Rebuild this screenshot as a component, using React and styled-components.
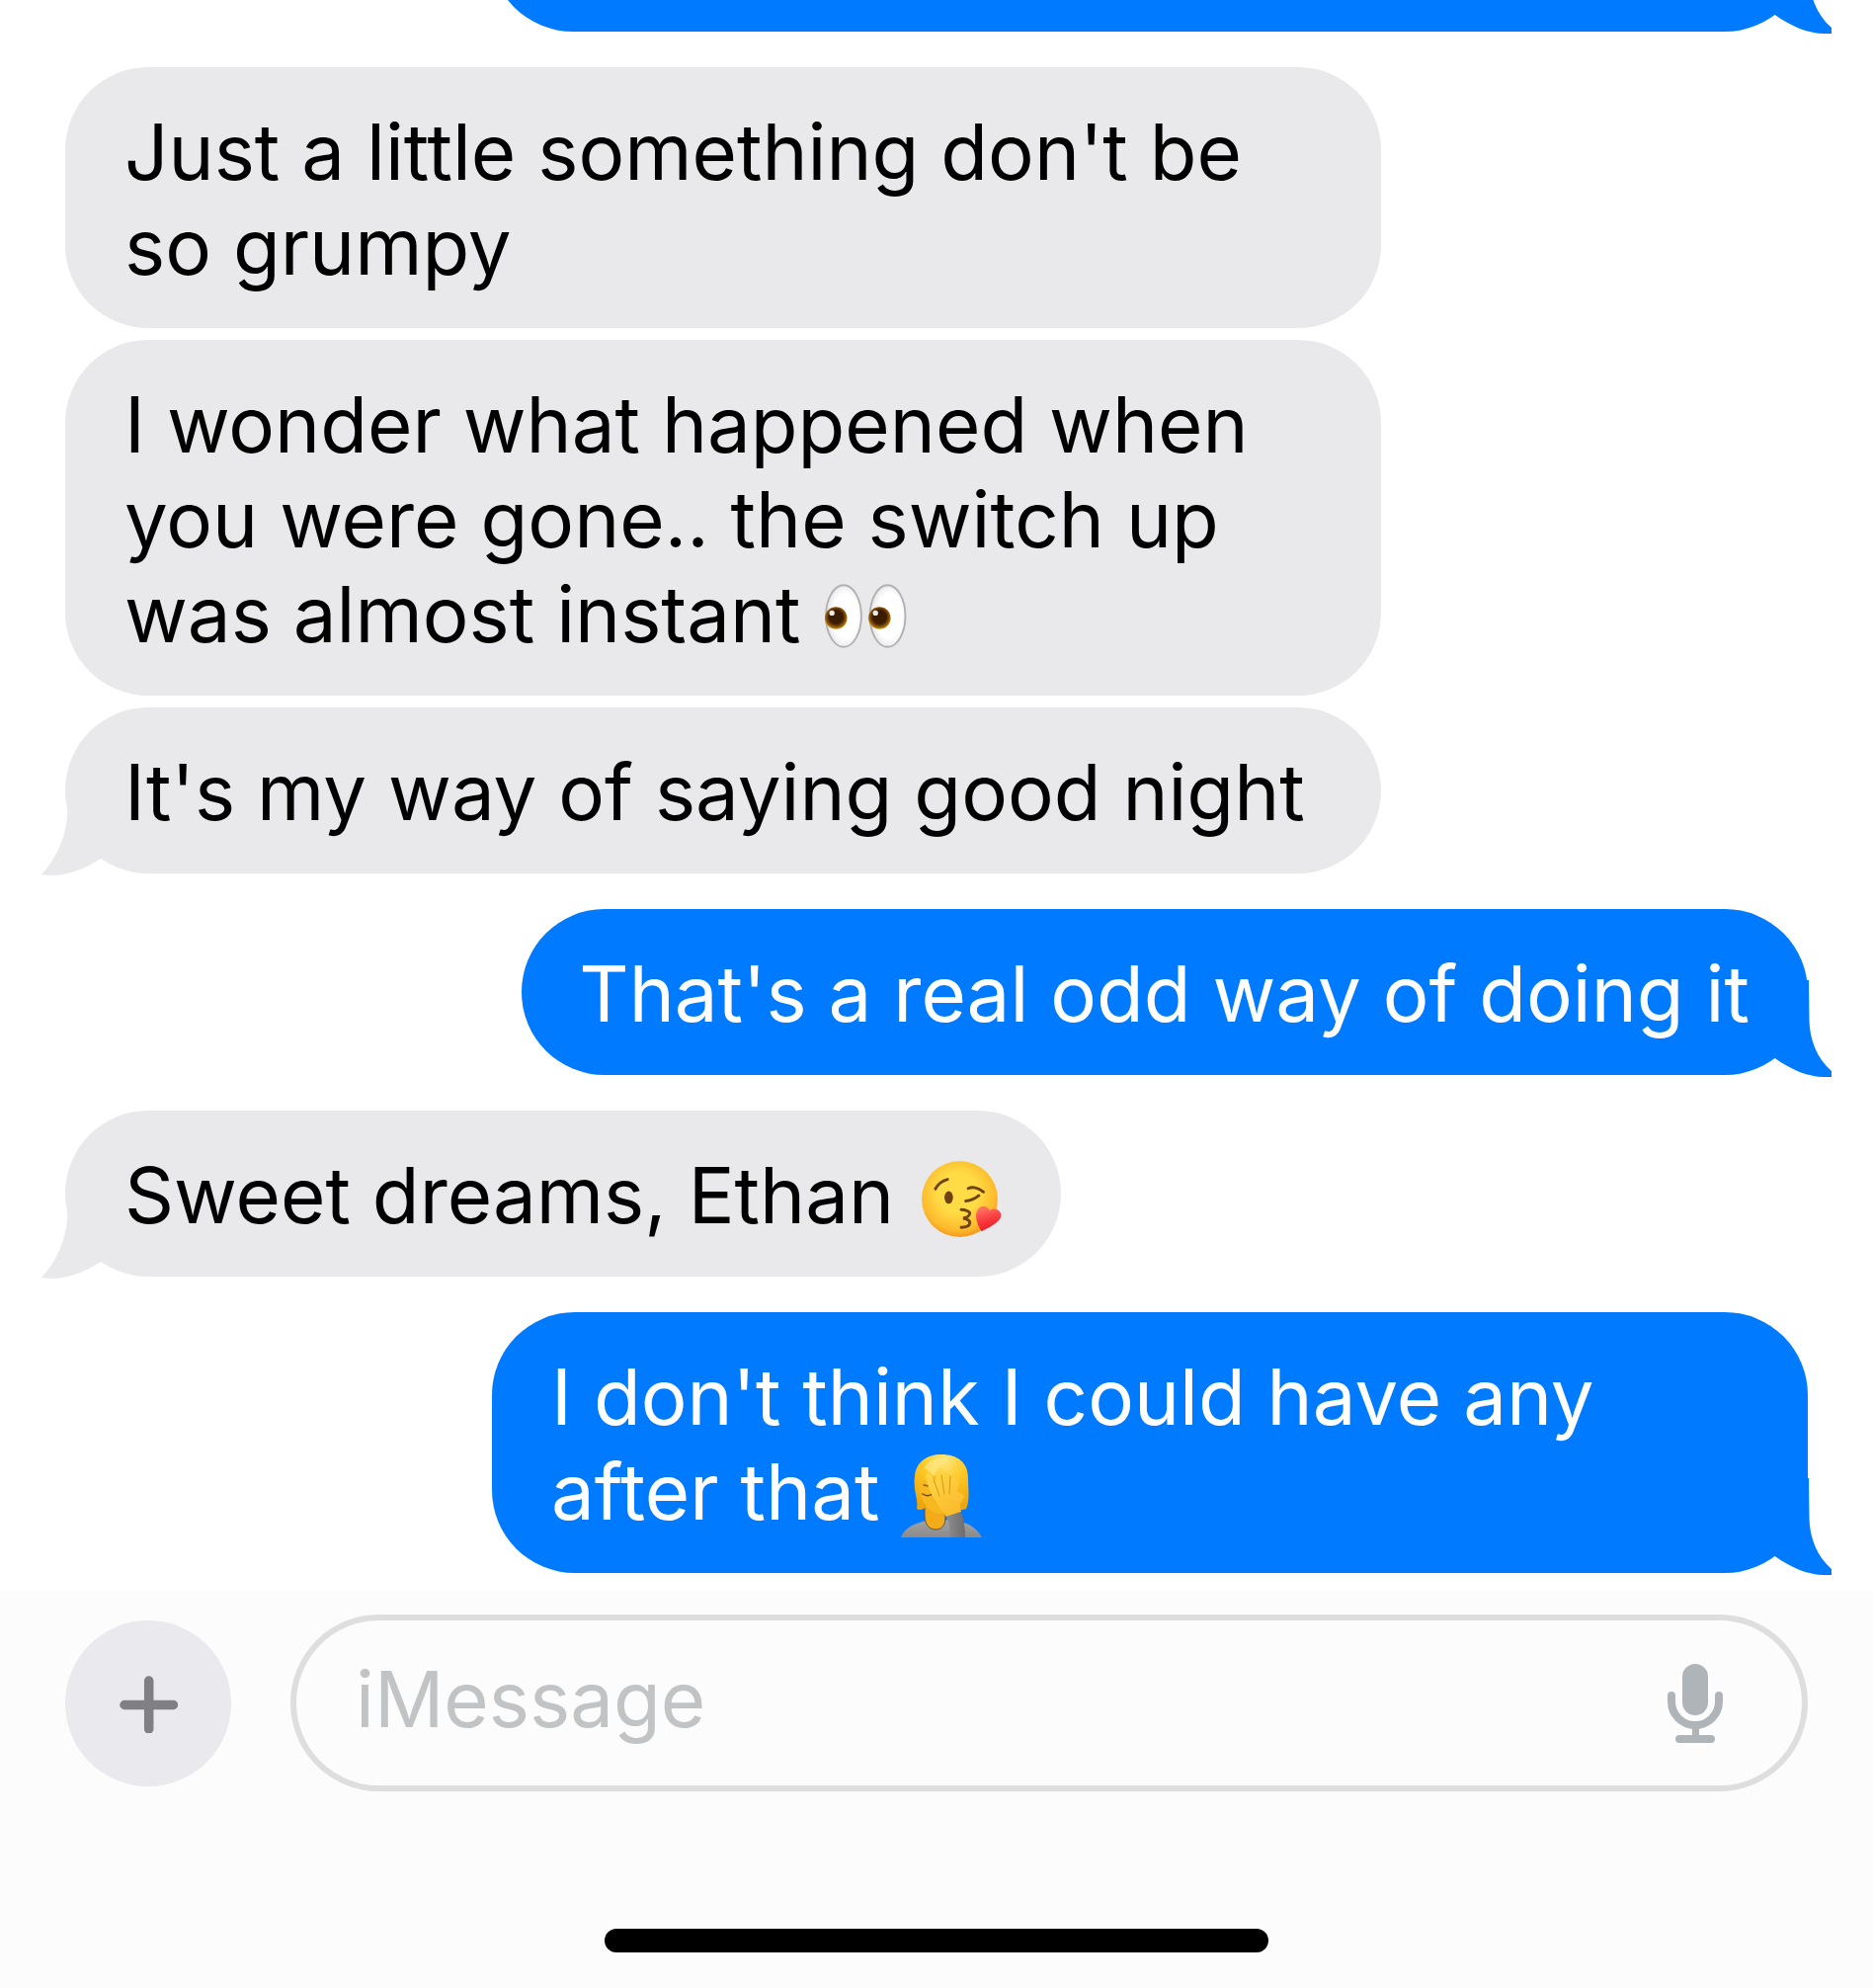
import React from 'react';
import styled, { createGlobalStyle } from 'styled-components';

const GlobalStyle = createGlobalStyle`
  html, body {
    margin: 0;
    padding: 0;
    height: 2012px;
    overflow: hidden;
    background: #fff;
    font-family: Inter, "Liberation Sans", sans-serif;
  }
`;

const Screen = styled.div`
  width: 1896px;
  height: 2012px;
  display: flex;
  flex-direction: column;
  overflow: hidden;
`;

const Thread = styled.div`
  display: flex;
  flex-direction: column;
  padding: 0 66px;
  margin-top: -136px;
  flex: none;
`;

const Bubble = styled.div`
  position: relative;
  box-sizing: border-box;
  width: ${p => (p.$wide ? '1332px' : 'fit-content')};
  min-height: 168px;
  max-width: 1332px;
  padding: 38px 59px 34px ${p => (p.$snug ? '58px' : '60px')};
  border-radius: 84px;
  font-size: 78px;
  line-height: 96px;
  font-weight: 400;
  align-self: ${p => (p.$mine ? 'flex-end' : 'flex-start')};
  background: ${p => (p.$mine ? '#007aff' : '#e9e9eb')};
  color: ${p => (p.$mine ? '#fff' : '#000')};
  margin-top: ${p => (p.$tight ? '12px' : '36px')};
`;

const OffscreenBubble = styled(Bubble)`
  width: 1334px;
  max-width: 1334px;
  margin-top: 0;
`;

const Tail = styled.svg`
  position: absolute;
  bottom: -4px;
  width: 110px;
  display: block;
  ${p => (p.$mine ? 'right: -26px; height: 102px;' : 'left: -26px; height: 106px;')}
`;

const Emoji = styled.svg`
  display: inline-block;
  vertical-align: ${p => p.$drop}px;
  margin: 0 ${p => p.$after || 0}px 0 ${p => p.$before || 0}px;
`;

const InputBar = styled.div`
  flex: 1;
  margin-top: 18px;
  background: #fcfcfc;
  display: flex;
  flex-direction: column;
`;

const InputRow = styled.div`
  display: flex;
  align-items: center;
  gap: 60px;
  padding: 24px 66px 0;
`;

const PlusButton = styled.div`
  width: 168px;
  height: 168px;
  flex: none;
  border-radius: 50%;
  background: #e9e9ee;
  display: flex;
  align-items: center;
  justify-content: center;
`;

const MessageField = styled.div`
  flex: 1;
  box-sizing: border-box;
  height: 179px;
  border: 6px solid #dedede;
  border-radius: 90px;
  display: flex;
  align-items: center;
  justify-content: space-between;
  padding: 0 80px 0 60px;
`;

const Placeholder = styled.span`
  font-size: 78px;
  line-height: 96px;
  padding-bottom: 8px;
  color: #c2c3c5;
`;

const HomeIndicator = styled.div`
  width: 672px;
  height: 24px;
  border-radius: 12px;
  background: #000;
  margin: 139px auto 0;
`;

const BlueTail = () => (
  <Tail $mine viewBox="0 0 110 102">
    <path
      fill="#007aff"
      d="M85 2 L85.5 43 C86 62 93 81 108 94 L108 100 L100.7 100 C 84 100 66 92 50.7 81 L50 2 Z"
    />
  </Tail>
);

const GrayTail = () => (
  <Tail viewBox="0 0 110 106">
    <path
      fill="#e9e9eb"
      d="M27 17 C27.5 24 28.3 30 28.3 37 C28.3 57 21 83 2 103 L13 104 C30 104 48 96 62 87 L60 17 Z"
    />
  </Tail>
);

const EyesEmoji = () => (
  <Emoji $drop={-6} $before={2} width="83" height="65" viewBox="0 0 81 63">
    <defs>
      <radialGradient id="eyeWhite" cx="0.55" cy="0.5" r="0.6">
        <stop offset="0.6" stopColor="#fff" />
        <stop offset="1" stopColor="#dedee0" />
      </radialGradient>
      <radialGradient id="iris" cx="0.5" cy="0.45" r="0.55">
        <stop offset="0.55" stopColor="#3a1c05" />
        <stop offset="0.8" stopColor="#8a5206" />
        <stop offset="1" stopColor="#c99a10" />
      </radialGradient>
    </defs>
    <ellipse cx="18.5" cy="31.5" rx="17.5" ry="30.5" fill="url(#eyeWhite)" stroke="#b0b0b2" strokeWidth="1.8" />
    <ellipse cx="62" cy="31.5" rx="17.5" ry="30.5" fill="url(#eyeWhite)" stroke="#b0b0b2" strokeWidth="1.8" />
    <circle cx="11" cy="33.5" r="11" fill="url(#iris)" />
    <circle cx="54" cy="33.5" r="11" fill="url(#iris)" />
    <circle cx="7" cy="28.5" r="2.6" fill="#fff" opacity="0.9" />
    <circle cx="50" cy="28.5" r="2.6" fill="#fff" opacity="0.9" />
  </Emoji>
);

const KissEmoji = () => (
  <Emoji $drop={-14} $before={5} $after={1} width="82" height="77" viewBox="0 0 80 75">
    <defs>
      <radialGradient id="kissFace" cx="0.48" cy="0.42" r="0.58">
        <stop offset="0.45" stopColor="#ffdc45" />
        <stop offset="0.85" stopColor="#fdb92c" />
        <stop offset="1" stopColor="#f39a1c" />
      </radialGradient>
      <linearGradient id="kissHeart" x1="0.3" y1="0" x2="0.6" y2="1">
        <stop offset="0" stopColor="#ff7a66" />
        <stop offset="0.6" stopColor="#f9333a" />
        <stop offset="1" stopColor="#e01f2d" />
      </linearGradient>
    </defs>
    <circle cx="38.5" cy="37.5" r="37.5" fill="url(#kissFace)" />
    <g fill="none" stroke="#6e4211" strokeWidth="2.8" strokeLinecap="round">
      <path d="M14.5 27.5 C17 22.5 21 19.5 26.5 18" />
      <path d="M47 27 C51 25 57 26 62 30.5" />
      <path d="M44.5 39.5 C49 39 53.5 37.5 57.5 34" />
      <path d="M40 48 C44 48 49 50 48.5 52 C48 55 44 56 42 56.5 C46 57 49 59 48.5 61.5 C48 64.5 44 65.5 40 65.5" />
    </g>
    <ellipse cx="27.7" cy="36" rx="4.2" ry="6.2" fill="#6e4211" />
    <path
      d="M60 69.5 C55 61 52.5 53 57 47 C60.5 43 66 44 68 49 C71 46 77 47 79 51.5 C81 57 74 63 60 69.5 Z"
      fill="url(#kissHeart)"
    />
  </Emoji>
);

const FacepalmEmoji = () => (
  <Emoji $drop={-18} width="82" height="84" viewBox="0 0 82 84">
    <defs>
      <linearGradient id="palmShirt" x1="0" y1="0" x2="0" y2="1">
        <stop offset="0" stopColor="#a3a3a3" />
        <stop offset="1" stopColor="#8a8a8a" />
      </linearGradient>
      <radialGradient id="palmHair" cx="0.55" cy="0.1" r="0.9">
        <stop offset="0" stopColor="#ffe680" />
        <stop offset="0.45" stopColor="#fdc924" />
        <stop offset="1" stopColor="#eea50d" />
      </radialGradient>
      <linearGradient id="palmHand" x1="0.2" y1="0" x2="0.8" y2="1">
        <stop offset="0" stopColor="#ffd545" />
        <stop offset="1" stopColor="#fbb92a" />
      </linearGradient>
      <linearGradient id="palmSleeve" x1="0" y1="0" x2="1" y2="0">
        <stop offset="0" stopColor="#8e8e8e" />
        <stop offset="1" stopColor="#6c6c6c" />
      </linearGradient>
    </defs>
    <path d="M0 84 C3 76 10 71 22 68 L27 66 C32 72 40 73 46 66 L60 68 C70 70 78 76 82 84 Z" fill="url(#palmShirt)" />
    <path d="M24 62 C24 72 30 76 35 76 C41 76 45 72 45 64 L45 52 L24 52 Z" fill="#f4ab19" stroke="#555" strokeWidth="1" />
    <path
      d="M14 22 C15 8 26 0 41 0 C57 0 68 8 68 24 C68 36 70 46 66 55 C62 57 58 56 54 53 L26 53 C22 56 19 57 16 55 C18 46 12 36 14 22 Z"
      fill="url(#palmHair)"
    />
    <path d="M19 30 C23 26 27 23 31 22 C42 22 56 24 60 30 C62 44 56 58 38 60 C26 58 18 44 19 30 Z" fill="#f6b821" />
    <path d="M24 14 C28 4 42 1 52 4 C44 6 38 12 33 22 C30 18 27 16 24 14 Z" fill="#ffe680" opacity="0.75" />
    <path d="M22 40 C25 42 29 42 32 40" fill="none" stroke="#5e3b0e" strokeWidth="1.5" strokeLinecap="round" />
    <path d="M23 31 L33 33" fill="none" stroke="#8a5a12" strokeWidth="1.5" strokeLinecap="round" />
    <path
      d="M46 63 C40 55 33 45 29 36 C27 30 25 25 25 22 C25 19 28 19 30 21 L35 26 C35 21 37 18 40 19 L42 22 C43 18 47 17 49 19 L51 23 C53 21 57 22 59 26 C60 29 58 34 57 38 C60 38 63 40 64 43 C63 46 60 48 60 52 L61 58 Z"
      fill="url(#palmHand)"
    />
    <path d="M33 25 L39 42 M41 21 L44 40 M50 22 L49 40" fill="none" stroke="#c98a10" strokeWidth="0.8" strokeLinecap="round" />
    <path d="M46 63 L61 58 C64 66 65 76 65 84 L49 84 C50 76 49 69 46 63 Z" fill="url(#palmSleeve)" />
  </Emoji>
);

const PlusIcon = () => (
  <svg width="60" height="60" viewBox="0 0 60 60">
    <path d="M30.7 7 V56 M6 31.5 H55.5" stroke="#7f7f84" strokeWidth="9.5" strokeLinecap="round" fill="none" />
  </svg>
);

const MicIcon = () => (
  <svg width="56" height="80" viewBox="0 0 56 80">
    <rect x="15" y="0" width="26" height="52" rx="13" fill="#aeb4b7" />
    <path d="M4 32 V38 A24 24 0 0 0 52 38 V32" stroke="#aeb4b7" strokeWidth="8" strokeLinecap="round" fill="none" />
    <rect x="25" y="62" width="7" height="12" fill="#aeb4b7" />
    <rect x="8" y="72" width="40" height="8" rx="4" fill="#aeb4b7" />
  </svg>
);

export default function App() {
  return (
    <Screen>
      <GlobalStyle />
      <Thread>
        <OffscreenBubble $mine>
          <BlueTail />
        </OffscreenBubble>
        <Bubble>Just a little something don't be so grumpy</Bubble>
        <Bubble $tight>
          I wonder what happened when you were gone.. the switch up was almost instant <EyesEmoji />
        </Bubble>
        <Bubble $tight $wide>
          It's my way of saying good night
          <GrayTail />
        </Bubble>
        <Bubble $mine $snug>
          That's a real odd way of doing it
          <BlueTail />
        </Bubble>
        <Bubble>
          Sweet dreams, Ethan <KissEmoji />
          <GrayTail />
        </Bubble>
        <Bubble $mine>
          I don't think I could have any after that <FacepalmEmoji />
          <BlueTail />
        </Bubble>
      </Thread>
      <InputBar>
        <InputRow>
          <PlusButton>
            <PlusIcon />
          </PlusButton>
          <MessageField>
            <Placeholder>iMessage</Placeholder>
            <MicIcon />
          </MessageField>
        </InputRow>
        <HomeIndicator />
      </InputBar>
    </Screen>
  );
}
